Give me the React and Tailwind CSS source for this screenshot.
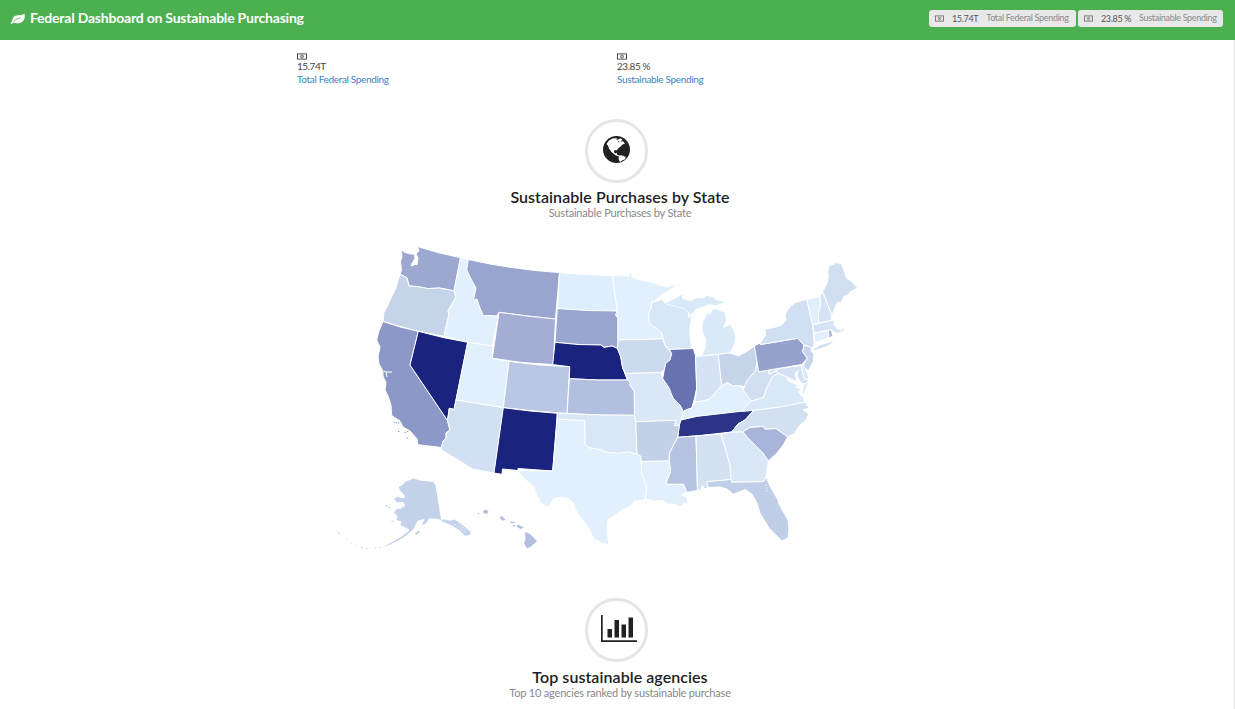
const STATES = [
  ["WA", "#9da8d1", "401,249 404,252 410,254 414,254 415,258 413,262 411,265 413,266 415,264 417,265 418,258 416,254 419,251 417.5,246.6 438,252.6 460.5,257.7 454,291 447,289.4 439,288 428,288.6 418,286.6 409,286 407,278 400,274 401.5,270 400.5,262 402,256"],
  ["OR", "#c6d4ea", "400,274 407,278 409,286 418,286.6 428,288.6 439,288 447,289.4 454,291 456,297 448,311 449,314 444,336.3 413,330 383,321.5 384,312 387,307 392,296 396,288"],
  ["ID", "#e1f0fc", "460.5,257.7 468.3,259.5 466.7,270 471,279 476,288 473.5,300 477,299 480,308 483.3,315.7 490,315.5 496.7,316 499,312.3 492.3,346 467.7,342.3 444,336.3 449,314 448,311 456,297 454,291"],
  ["MT", "#99a5cf", "468.3,259.5 490,264 510,267.3 535,270.5 559.5,272.6 555.5,319 527,316 499,312.3 496.7,316 490,315.5 483.3,315.7 480,308 477,299 473.5,300 476,288 471,279 466.7,270"],
  ["WY", "#a4aed5", "499,312.3 527,316 555.5,319 553.3,364.6 522,362.5 492.3,358.3"],
  ["CA", "#8c98c7", "383,321.5 400,327 418.3,331.3 410,365 447.5,420.5 450,430 446,433 446,438 442.7,442 441.7,447.5 417.7,444.7 417,439 410,431 403,427 400,421 391.7,415.5 391,405 388,396 385,390 386,383 383,376 383,371 379,364 378,357 380,347 376.7,340 379,331"],
  ["NV", "#1a237e", "418.3,331.3 443,337.5 467.7,342.3 456,400 454,409.5 449.3,408.3 447.5,420.5 410,365"],
  ["UT", "#e1f0fc", "467.7,342.3 492.3,346 492.3,358.3 509,361.4 503.3,407.7 456,400"],
  ["CO", "#b9c7e3", "509,361.4 539,365 569.7,366.7 567,413.5 535,411 503.3,407.7"],
  ["AZ", "#d1e0f2", "456,400 503.3,407.7 494,473 472.7,469 441,449.5 442.7,442 446,438 446,433 450,430 447.5,420.5 449.3,408.3 454,409.5"],
  ["NM", "#1a237e", "503.3,407.7 530,411 557.3,413.3 552.7,471 518,468.5 518,470.5 502.5,469 502,474.3 494,473"],
  ["ND", "#dfeefc", "559.5,272.6 585,274.6 612.5,275.6 615,295 617.3,311 588,310.5 557.3,308.5"],
  ["SD", "#9aa6d0", "557.3,308.5 588,310.5 617.3,311 615.7,315 618,318 618,339.7 617.5,348.5 612,346 604,347.4 601,345 578,344.5 555,342.3"],
  ["NE", "#1a237e", "555,342.3 578,344.5 601,345 604,347.4 612,346 617.5,348.5 620.7,356.7 622.7,368 627.5,380 598,380 569.3,378.7 569.7,366.7 552.7,364.6"],
  ["KS", "#b2bfdf", "569.3,378.7 598,380 627.5,380 630,381.5 630.3,386 634.3,391 634.5,415.3 600,415 567,413.5"],
  ["OK", "#d8e6f6", "557.3,413.3 567,413.5 600,415 634.5,415.3 635.7,421.7 637,454.2 628,451.8 619,453.4 611.7,452.7 605,452 600,449.5 590,448 585,445 584.7,420.7 557.3,419.3"],
  ["TX", "#e1f0fc", "557.3,419.3 584.7,420.7 585,445 590,448 600,449.5 605,452 611.7,452.7 619,453.4 628,451.8 637,454.2 640.8,456 641.5,473 646.7,486.7 645.5,499 639,501 634,501 632,505 622,510 615,515 608,520 607,530 608.7,544.5 602,543 593,538.5 590,530 584,522 576.7,512 573,503 568,498.5 559,497.5 554,498.5 548,507 541,503 536.7,495 534,487 525,479 517,470.5 552.7,471"],
  ["MN", "#e1f0fc", "612.5,275.6 629,276 629.5,272 631.5,273 632,277 640,280 650,281.7 659,285 667,286.5 679,284 670,290 660,296 654,302 651.7,301 651.5,307 648.7,313 649.5,323.5 656,328 661.7,333 662.7,338.7 640,339.7 618,339.7 618,318 615.7,315 617.3,311 615,295"],
  ["IA", "#ccdaef", "618,339.7 640,339.7 662.7,338.7 665,345.5 671.7,353.3 670,360 665.7,363.3 664.3,370 660.7,372.5 626,373.5 622.7,368 620.7,356.7 617.5,348.5"],
  ["MO", "#dae7f7", "625,373.5 660.7,372.5 662.7,378.5 669.3,388.3 671,393 673.3,398.3 680,405 683.3,411.5 681,420 679.3,425.3 674.3,425.5 676,420.3 635.7,421.7 634.5,415.3 634.3,391 630.3,386 630,381.5 627.5,380"],
  ["WI", "#d8e7f6", "651.7,301 654.3,302 661.7,299.3 665,303.3 674,306 683.3,308.3 688.3,312.3 689,318 692.3,313.3 690,326.7 690,337 691.7,348.3 669.3,349.5 665,345.5 661.7,333 656,328 649.5,323.5 648.7,313 651.5,307"],
  ["MIU", "#d9e9f8", "665,303.3 676.7,297.7 683,294 682,298.5 690,301 697,298 705,297.7 707,295 710,297 713,296.7 716,300 722,301 725,303 720,304 716,305.5 709,304.5 701.7,307.5 696,309 690.5,315 688.3,312.3 683.3,308.3 674,306"],
  ["MI", "#d9e9f8", "713.3,308.3 719,310 725,312.3 726.7,320 723.5,327.5 730,324.3 733,328 736,336 734.3,345 730,353 720,354 701.5,356 705,348 706,340 702,331 702.5,322 705,318 707,312.5 710,314"],
  ["IL", "#6a73b1", "669.3,349.5 693.3,348.5 695.5,355.5 696.7,388.3 694.5,398.3 691.7,408.3 687,409.5 683.3,411.5 680,405 673.3,398.3 671,393 669.3,388.3 662.7,378.5 664.3,370 665.7,363.3 670,360 671.7,353.3"],
  ["IN", "#d5e3f4", "695.5,356.5 718.3,354.5 721.7,386 716.7,391 710,399 703,401 695,402 696.7,388.3"],
  ["OH", "#c6d4ea", "718.3,354.5 727,353 733.3,354 738.3,356 746,352 754.3,346 757.3,361.7 755,371.7 748,379 745,387 739,385.5 733.3,386 727,382.5 721.7,386"],
  ["KY", "#e1f0fc", "695,402 703,401 710,399 716.7,391 721.7,386 727,382.5 733.3,386 739,385.5 743.3,389 751,401 741.7,411.2 696.7,416.4 681,420 683.3,411.5 687,409.5 691.7,408.3"],
  ["TN", "#2c3488", "681,420 696.7,416.4 741.7,411.2 753.7,410.4 745,420 738,424 731.7,432 700,435.5 677.7,437.3 679.3,425.3"],
  ["MS", "#b6c4e1", "677.7,437.3 696,436 697.5,490.5 686.7,492.3 683.3,484.3 665.7,484.3 670.7,471 669,461 669.3,453.3 674,444"],
  ["AL", "#d3e1f3", "696,436 721,434 730,465 731,479.5 706.7,481.7 708,487.5 704,489 702.3,485 701,490 697.5,490.5"],
  ["AR", "#c2d0e8", "635.7,421.7 676,420.3 674.3,425.5 679.3,425.3 677.7,437.3 674,444 669.3,453.3 669,461 641.3,461.5 640.8,456 637,454.2"],
  ["LA", "#e1f0fc", "641.3,461.5 669,461 670.7,471 665.7,484.3 683.3,484.3 686.5,492 682,495 688,498 687,502 692,505 684,503 680,507 675,504.5 668,504 663,500.5 655,501 645.5,499 646.7,486.7 641.5,473"],
  ["GA", "#d9e7f6", "721,434 731.7,432 742.7,431.7 748,438 756.7,446.7 763,453 768.3,461 766,476.7 764,481 761,481.7 731.7,482.3 731,479.5 730,465"],
  ["SC", "#a8b4d8", "742.7,431.7 750,427.3 763.3,426.4 765,429 776,428.5 787.7,436.7 784,444 777,453 768.3,461 763,453 756.7,446.7 748,438"],
  ["NC", "#d2e0f2", "753.7,410.4 780,407 805,402 809,408 803,410 809,414 806,420 800,425 794,434 787.7,436.7 776,428.5 765,429 763.3,426.4 750,427.3 742.7,431.7 731.7,432 738,424 745,420"],
  ["FL", "#c0cee7", "706.7,481.7 731,479.5 731.7,482.3 761,481.7 764,481 766,477 770,486 778,500 779,504 788,520 789,530 788,538 781.7,541 776,535 769,528 766,523 760,513.3 757,503 752,494 745,489.5 739,492 733.3,494.3 727,489 720,487 708,487.5"],
  ["VA", "#d9e9f8", "741.7,411.2 751,401 763.3,397.5 767,387 772,377 778,373 786.7,376.7 788,381 800,386 796,387 802,390 798,392 803,397 805,402 780,407 753.7,410.4"],
  ["WV", "#d1dff1", "757.3,361.7 758.7,371.8 769,370 769,374 777,370.5 778,373 772,377 767,387 763.3,397.5 751,401 743.3,390 745,385 748,379 755,371.7"],
  ["MD", "#d3e1f2", "769,370 801,365.5 804.5,379 809,379 806,384 801,383 797,376 798,370 795,374 797,382 786.7,376.7 778,373 777,370.5 769,374"],
  ["DE", "#d7e5f5", "801,365.5 803,365 808,375 809,379 804.5,379"],
  ["ESV", "#d9e9f8", "804.5,384 808,383 805,390 803,397 802.5,390"],
  ["PA", "#96a1cd", "754.3,346 760,343 760.5,344.5 797.7,338.3 804,345 802.7,351.7 807.3,358.3 801.7,364.5 758.7,371.8"],
  ["NJ", "#c8d6eb", "804,345 812,347.5 811,351 814,354 813,362 808.3,371 803,366 807.3,358.3 802.7,351.7"],
  ["NY", "#d0dff1", "760,343 765.7,335 765,329 774,327.5 781.7,325 786,320 785,314 789,308 795,302.7 806.7,299.3 810,313.3 812.7,325 814.3,343.3 813,348 804,345 797.7,338.3 760.5,344.5"],
  ["LI", "#d0dff1", "813,349 821,344.5 835,340.5 828,346 814,351"],
  ["VT", "#e0effb", "806.7,299.3 820,296.5 820.7,305 818.5,312 818.5,323 812.7,325 810,313.3"],
  ["NH", "#d5e3f4", "820,296.5 822.7,291.5 831.7,315 831,320.5 818.5,323 818.5,312 820.7,305"],
  ["ME", "#d1dff1", "822.7,291.5 827,283 828.5,276 827.5,272 829.3,265 833,265 836,262.5 841.7,264 846.7,278.3 851,281 857.5,288 850,292 848,295 844,296 841,303 838,302 836,305 832,315.5"],
  ["MA", "#d5e3f4", "812.7,325 831,320.5 834,320 834,325 838,329 842,330 843,327 845,331 836,333.5 831,329.8 814.3,333"],
  ["CT", "#e0effb", "814.3,333 828.3,330.4 829,337.3 815,342.7"],
  ["RI", "#a9b6d9", "828.3,330.4 831,329.8 833,336 829,338"],
  ["AK", "#c3d1e9", "398,486.7 402,485 405,481.5 413.3,478 420,480 433.3,481.5 436,485 441.7,520.5 435,519 429,519 426,524 421,526 424,519.5 418,521 414,529 405,537 396.7,541.7 389,545.5 380,548 393,541 402,536 409,530 404,527 400,526 401,522 396,520 397,516 393.5,513 396,509 401,508 405,505 403,502.5 397,503 393.5,499 397,496.5 404,498 404,495 400,491"],
  ["AKP", "#c3d1e9", "441.7,519 450,520.5 455,519.5 464,526 471,532 470,535 465,536 459,530 451.7,525.5 441,521"],
  ["KOD", "#c3d1e9", "415,533 419,530 420,532 416,535.5"],
];

const HAWAII = [
  "483,511 486,509.5 488.5,511 487,514 483.5,513",
  "499.5,517.5 502,516 505.5,520 502,520.5",
  "510,521.5 515,522 515,523.2 511,523",
  "513,525 515.5,525 515,527 513.5,526.5",
  "516.5,524.5 520,525.5 524,527.5 521,529 517.5,527.5",
  "525,532 530,534 537,541 531,546.5 527,548.5 524,543.5 525.5,539",
];

const SPECKS = [
  [385, 505.5, 2.4], [388, 507, 2], [391.5, 520.5, 2], [338, 532, 1], [339, 533.5, 0.8], [346, 539, 0.8],
  [351, 542.5, 0.8], [356, 545, 0.9], [361, 547, 1.6], [366, 547.8, 1.4], [375, 547.5, 1.4], [379, 547, 1.2],
];

const ISLANDS = [[393.5, 421.5], [396, 422], [398, 422.5], [404.5, 432], [407, 431], [406.5, 437.5], [398, 431]];

function Money({ className }) {
  return (
    <svg viewBox="0 0 10 8" preserveAspectRatio="none" className={`shrink-0 ${className}`} fill="none" stroke="currentColor" strokeWidth="0.9">
      <rect x="0.5" y="1" width="9" height="6" />
      <ellipse cx="5" cy="4" rx="1.5" ry="1.9" strokeWidth="0.7" />
      <path d="M5 3v2" strokeWidth="0.7" />
    </svg>
  );
}

function Leaf() {
  return (
    <svg viewBox="0 0 15 12" className="mt-px h-3 w-[15px]" fill="currentColor">
      <path d="M14.200.4c.9 1.600.8 4.100-.1 6-1.400 2.800-4.600 4.200-7.600 3.900-1.200-.1-2-.5-3-.7-.7.1-1.200 1.500-2 1.500-.5 0-.9-.6-.8-1 .2-.8 1.400-1.300 1.700-2C2 5.500 3.500 3.300 6 2.500c2.400-.8 6.400.2 8.200-2.100z" />
      <path d="M4.200 8.200C5.700 6.500 7.500 5.400 10.200 5.200" fill="none" stroke="#4caf50" strokeWidth="0.8" strokeLinecap="round" />
    </svg>
  );
}

function Globe() {
  return (
    <svg viewBox="0 0 27 27" className="h-[27px] w-[27px]">
      <circle cx="13.5" cy="13.5" r="13.5" fill="#212121" />
      <path
        fill="#fff"
        d="M3.5 8L6 4.5 10 2.3 14 2.2 13.5 3.8 15.5 3.5 17 2.2 19.5 3.5 17.5 5.5 20 5.2 22 7.5 19.5 8.5 17 11 15.5 12 14 14.2 11.5 14 11 16.5 12.5 17.5 13.5 16.5 14 18.5 16 19.5 18.5 19.2 22.8 21 22 23.2 19 24.5 17.5 25.8 16.3 25 15.5 22.5 16 20.5 12.5 19.3 8.5 16 6 12.5 5 9.5z"
      />
      <path d="M15 5.500l1.500.6" stroke="#212121" strokeWidth="0.7" />
    </svg>
  );
}

function Bars() {
  return (
    <svg viewBox="0 0 36 27" className="ml-[4px] h-[27px] w-9 shrink-0" fill="#212121">
      <path d="M0 0h1.700v25.200h34.300v1.800H0zM6.500 14h4.500v8.500H6.500zM13.500 5h4.500v17.500h-4.500zM20.500 9.500h4.500v13h-4.500zM27.500 2.500h4.500v20h-4.500z" />
    </svg>
  );
}

function Badge({ value, label, className }) {
  return (
    <div className={`flex h-[17px] items-center rounded-[3px] bg-[#e8e8e8] pl-[6px] text-[#666] ${className}`}>
      <Money className="mb-px h-[7px] w-[9px]" />
      <span className="ml-2 text-[9px] leading-none tracking-[-0.35px] text-[#555]">{value}</span>
      <span className="ml-[8px] pb-[2px] text-[9px] leading-none tracking-[-0.31px] text-[#8a8a8a]">{label}</span>
    </div>
  );
}

function Stat({ value, label }) {
  return (
    <div className="w-80">
      <Money className="mt-px h-[7px] w-[10px] text-[#333]" />
      <div className="text-[10px] leading-[13px] tracking-[-0.45px] text-[#444]">{value}</div>
      <div className="text-[10px] leading-[13px] tracking-[-0.34px] text-[#4183c4]">{label}</div>
    </div>
  );
}

function Heading({ title, sub, gap, children }) {
  return (
    <div className="flex flex-col items-center">
      <div className="mr-[7px] flex h-[64px] w-[63px] items-center justify-center rounded-full border-[3px] border-[#e5e5e5] pb-[4px]">
        {children}
      </div>
      <h2 className={`${gap} text-[16px] leading-[20px] font-semibold tracking-[0.06px] text-[#212121]`}>{title}</h2>
      <p className="text-[11px] leading-[12px] tracking-[-0.19px] text-[#888]">{sub}</p>
    </div>
  );
}

function UsMap() {
  return (
    <svg viewBox="330 235 540 325" className="block h-[325px] w-[540px]">
      {STATES.map(([id, color, points]) => (
        <polygon key={id} points={points} fill={color} stroke="#fff" strokeWidth={id.length > 2 ? 0.4 : 1} strokeLinejoin="round" />
      ))}
      {HAWAII.map((points) => (
        <polygon key={points} points={points} fill="#b2bfe0" />
      ))}
      <circle cx="478.5" cy="513.5" r="0.8" fill="#b2bfe0" />
      {SPECKS.map(([x, y, w]) => (
        <rect key={x} x={x} y={y} width={w} height="1" fill="#c3d1e9" />
      ))}
      {ISLANDS.map(([x, y]) => (
        <rect key={x} x={x} y={y} width="1.3" height="1" fill="#8c98c7" />
      ))}
      <path d="M384 371l2 1h6M386 372l1 5" stroke="#fff" strokeWidth="1" fill="none" />
      <path d="M454 524l12 9M458 523l9 8M766 484l1 8" stroke="#fff" strokeWidth="0.7" strokeDasharray="2 1" fill="none" />
    </svg>
  );
}

export default function App() {
  return (
    <div className="h-[709px] overflow-hidden bg-white font-[Lato,sans-serif]">
      <header className="flex h-10 items-start justify-between bg-[#4caf50] pr-3 pl-[10px] text-white">
        <div className="flex h-9 items-center gap-[5px]">
          <Leaf />
          <h1 className="text-[14px] leading-5 font-bold tracking-[-0.21px] whitespace-nowrap">
            Federal Dashboard on Sustainable Purchasing
          </h1>
        </div>
        <div className="mt-[10px] flex gap-[2px] whitespace-nowrap">
          <Badge value="15.74T" label="Total Federal Spending" className="w-[147px]" />
          <Badge value="23.85 %" label="Sustainable Spending" className="w-[145px]" />
        </div>
      </header>
      <main className="h-[669px] border-r border-[#e8e8e8]">
        <div className="flex pt-[12px] pl-[297px]">
          <Stat value="15.74T" label="Total Federal Spending" />
          <Stat value="23.85 %" label="Sustainable Spending" />
        </div>
        <section className="mt-[33px] pl-[6px]">
          <Heading title="Sustainable Purchases by State" sub="Sustainable Purchases by State" gap="mt-1">
            <Globe />
          </Heading>
        </section>
        <div className="mt-[16px] ml-[330px]">
          <UsMap />
        </div>
        <section className="mt-[38px] pl-[6px]">
          <Heading title="Top sustainable agencies" sub="Top 10 agencies ranked by sustainable purchase" gap="mt-[5px]">
            <Bars />
          </Heading>
        </section>
      </main>
    </div>
  );
}
